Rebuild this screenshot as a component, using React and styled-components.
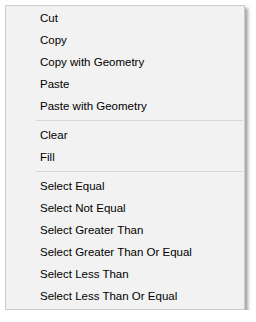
import React from 'react';
import styled, { createGlobalStyle } from 'styled-components';

const Global = createGlobalStyle`
    body{
        margin:0;
        background:#ffffff;
        font-family:"Liberation Sans", Arial, sans-serif;
    }
`

const Page = styled.div`
    padding:5px 0 0 5px;
`

const Menu = styled.div`
    width:240px;
    box-sizing:border-box;
    background:#f2f2f2;
    border:solid 1px #cccccc;
    box-shadow:3px 3px 3px rgba(0,0,0,0.35);
    padding:1px 0 2px 0;
    display:flex;
    flex-direction:column;
`

const Item = styled.div`
    height:22px;
    line-height:22px;
    padding-left:34px;
    font-size:11.5px;
    color:#000;
    white-space:nowrap;
`

const Separator = styled.div`
    height:1px;
    background:#d7d7d7;
    margin:3px 1px 3px 30px;
`

const groups = [
    ['Cut', 'Copy', 'Copy with Geometry', 'Paste', 'Paste with Geometry'],
    ['Clear', 'Fill'],
    ['Select Equal', 'Select Not Equal', 'Select Greater Than', 'Select Greater Than Or Equal', 'Select Less Than', 'Select Less Than Or Equal'],
]

const App = () => (
    <>
        <Global/>
        <Page>
            <Menu>
                {groups.map((g, i) => (
                    <React.Fragment key={i}>
                        {i > 0 && <Separator/>}
                        {g.map(label => <Item key={label}>{label}</Item>)}
                    </React.Fragment>
                ))}
            </Menu>
        </Page>
    </>
)

export default App;
